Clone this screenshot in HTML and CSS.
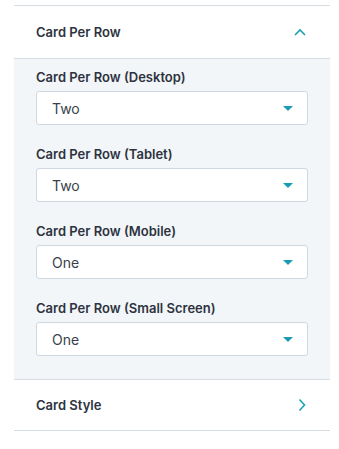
FILE: index.html
```html
<!DOCTYPE html>
<html lang="en">

<head>
	<title>Card settings</title>
	<meta charset="UTF-8">
	<meta name="viewport" content="width=device-width, initial-scale=1.0">
	<link rel="stylesheet" href="styles.css">
</head>

<body>
	<div class="panel">
		<div class="section open">
			<div class="section-head">
				<span>Card Per Row</span>
				<svg class="chevron" width="12" height="8" viewBox="0 0 12 8">
					<path d="M1 7 L6 2 L11 7" fill="none" stroke="#1aa0b8" stroke-width="1.6"/>
				</svg>
			</div>
			<div class="section-body">
				<div class="field">
					<label>Card Per Row (Desktop)</label>
					<div class="select"><span>Two</span><i class="caret"></i></div>
				</div>
				<div class="field">
					<label>Card Per Row (Tablet)</label>
					<div class="select"><span>Two</span><i class="caret"></i></div>
				</div>
				<div class="field">
					<label>Card Per Row (Mobile)</label>
					<div class="select"><span>One</span><i class="caret"></i></div>
				</div>
				<div class="field">
					<label>Card Per Row (Small Screen)</label>
					<div class="select"><span>One</span><i class="caret"></i></div>
				</div>
			</div>
		</div>
		<div class="section">
			<div class="section-head">
				<span>Card Style</span>
				<svg class="chevron" width="8" height="14" viewBox="0 0 8 14">
					<path d="M1.5 1.5 L6.5 7 L1.5 12.5" fill="none" stroke="#1aa0b8" stroke-width="1.6"/>
				</svg>
			</div>
		</div>
	</div>
</body>

</html>
```

FILE: styles.css
```css
* {
	box-sizing: border-box;
}

body {
	margin: 0;
	padding: 5px 9px 0 14px;
	background: #fff;
	font-family: "Inter", "Noto Sans", sans-serif;
	color: #2d3340;
}

.panel {
	border-top: 1px solid #d5dce4;
}

.section {
	border-bottom: 1px solid #d5dce4;
}

.section-head {
	height: 52px;
	display: flex;
	align-items: center;
	justify-content: space-between;
	padding: 0 24px 0 22px;
	font-size: 13px;
	font-weight: 600;
}

.section + .section .section-head {
	height: 50px;
}

.section-body {
	background: #f3f6f9;
	border-top: 1px solid #d5dce4;
	padding: 10px 22px 23px 22px;
}

.field {
	margin-bottom: 21px;
}

.field:last-child {
	margin-bottom: 0;
}

label {
	display: block;
	font-size: 13px;
	line-height: 16px;
	font-weight: 600;
	margin-bottom: 6px;
}

.select {
	height: 34px;
	background: #fff;
	border: 1px solid #cfd7e1;
	border-radius: 3px;
	display: flex;
	align-items: center;
	justify-content: space-between;
	padding: 0 14px 0 15px;
	font-size: 14px;
	color: #3a3f4b;
}

.caret {
	width: 0;
	height: 0;
	border-left: 5px solid transparent;
	border-right: 5px solid transparent;
	border-top: 5px solid #1a9cb3;
}
```
